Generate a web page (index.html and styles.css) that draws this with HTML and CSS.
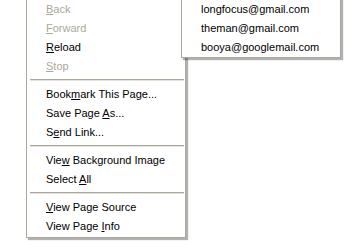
FILE: index.html
```html
<!DOCTYPE html>
<html lang="en">
<head>
    <meta charset="UTF-8">
    <title>Context Menu</title>
    <link rel="stylesheet" href="styles.css">
</head>
<body>
    <div class="context-menu">
        <div class="menu-item disabled"><u>B</u>ack</div>
        <div class="menu-item disabled"><u>F</u>orward</div>
        <div class="menu-item"><u>R</u>eload</div>
        <div class="menu-item disabled"><u>S</u>top</div>
        <div class="menu-sep"></div>
        <div class="menu-item">Book<u>m</u>ark This Page...</div>
        <div class="menu-item">Save Page <u>A</u>s...</div>
        <div class="menu-item">S<u>e</u>nd Link...</div>
        <div class="menu-sep"></div>
        <div class="menu-item">Vie<u>w</u> Background Image</div>
        <div class="menu-item">Select <u>A</u>ll</div>
        <div class="menu-sep"></div>
        <div class="menu-item"><u>V</u>iew Page Source</div>
        <div class="menu-item">View Page <u>I</u>nfo</div>
    </div>

    <div class="email-popup">
        <div class="email-item">longfocus@gmail.com</div>
        <div class="email-item">theman@gmail.com</div>
        <div class="email-item">booya@googlemail.com</div>
    </div>
</body>
</html>
```

FILE: styles.css
```css
body {
    margin: 0;
    background: #fff;
    font-family: "Liberation Sans", Arial, sans-serif;
    font-size: 11px;
    color: #000;
    width: 359px;
    height: 250px;
    overflow: hidden;
}
.context-menu {
    position: absolute;
    left: 26px;
    top: -4px;
    width: 158px;
    background: #fff;
    border: 1px solid #aca899;
    padding: 3px 0 1px 0;
    box-shadow: 2px 2px 1px rgba(0, 0, 0, 0.3);
}
.menu-item {
    height: 19px;
    line-height: 19px;
    padding-left: 19px;
    white-space: nowrap;
}
.menu-item.disabled {
    color: #aca899;
}
.menu-sep {
    height: 6px;
    padding-top: 3px;
    margin: 0 1px 0 3px;
}
.menu-sep::after {
    content: "";
    display: block;
    height: 1px;
    background: #aca899;
    border-bottom: 1px solid #e4e2dc;
}
.email-popup {
    position: absolute;
    left: 181px;
    top: -4px;
    width: 158px;
    background: #fff;
    border: 1px solid #aca899;
    padding: 3px 0 0 0;
    box-shadow: 2px 2px 1px rgba(0, 0, 0, 0.3);
}
.email-item {
    height: 19px;
    line-height: 19px;
    padding-left: 19px;
    white-space: nowrap;
}
```
